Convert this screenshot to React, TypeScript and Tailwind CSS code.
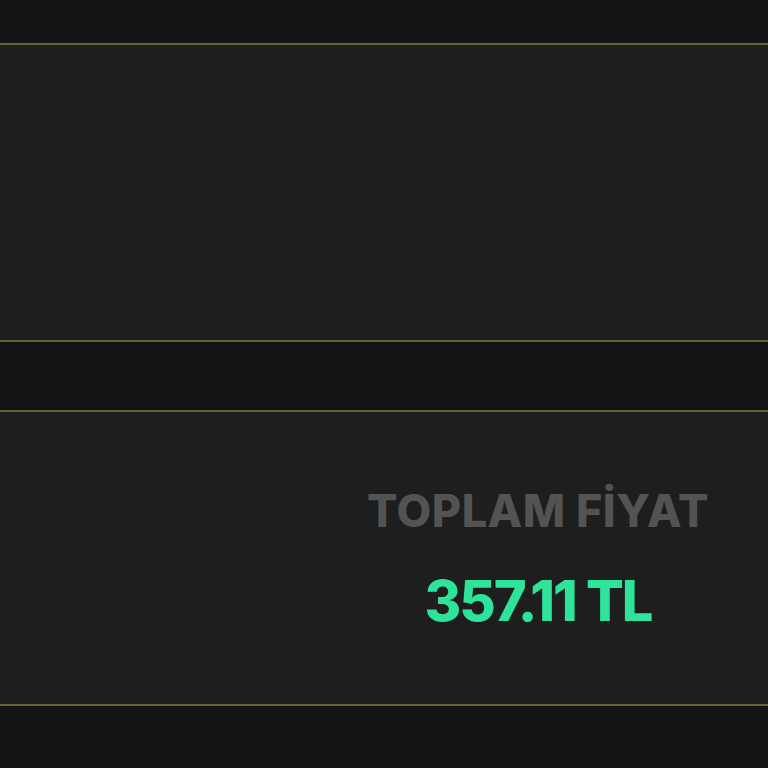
import React from "react";

export default function App() {
  return (
    <div className="min-h-[768px] w-full bg-[#131313] pt-[43px]" style={{ fontFamily: "Inter, 'Noto Sans', sans-serif" }}>
      {/* Upper empty panel */}
      <div className="h-[299px] border-y-2 border-[#6b6232] bg-[#1e1e1e]" />

      {/* Price panel */}
      <div className="mt-[68px] flex h-[296px] items-center justify-end border-y-2 border-[#6b6232] bg-[#1e1e1e] pr-[40px]">
        <div className="flex w-[380px] flex-col items-center">
          <div className="text-[45px] font-extrabold leading-none tracking-[0.5px] text-[#535353]">
            TOPLAM FİYAT
          </div>
          <div className="mt-[40px] text-[56px] font-extrabold leading-none tracking-[-2px] text-[#2ee39a]">
            357.11 TL
          </div>
        </div>
      </div>
    </div>
  );
}
